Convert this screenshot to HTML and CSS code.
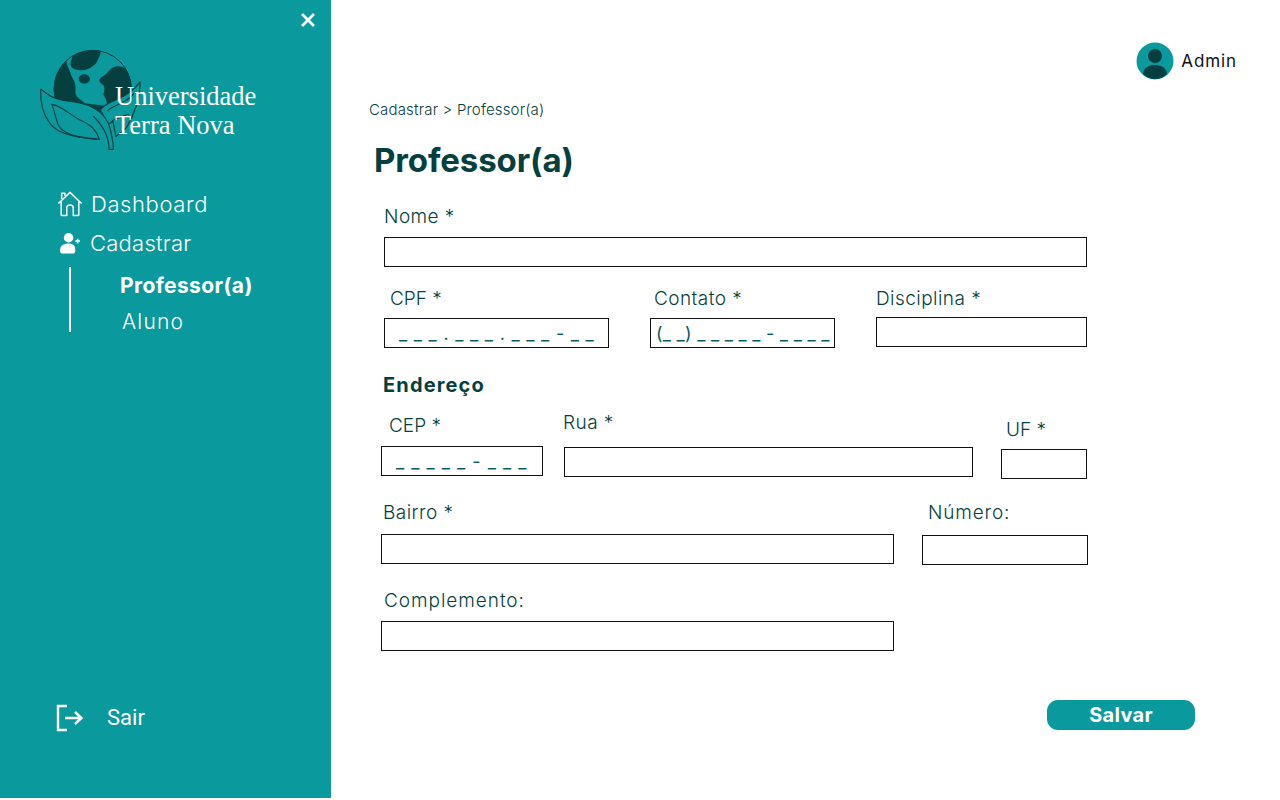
FILE: index.html
```html
<!DOCTYPE html>
<html lang="pt">
<head>
<meta charset="utf-8">
<title>Professor(a)</title>
<link rel="stylesheet" href="styles.css">
</head>
<body>
<aside class="sidebar">
  <div class="close-row">
    <svg class="close-icon" viewBox="0 0 16 16"><path d="M2 2L14 14M14 2L2 14"/></svg>
  </div>
  <div class="logo">
    <svg class="logo-mark" viewBox="0 0 360 360">
      <defs><clipPath id="globe"><circle cx="188" cy="147" r="117"/></clipPath></defs>
      <circle class="g-dark" cx="188" cy="147" r="117"/>
      <g clip-path="url(#globe)">
        <path class="g-light" d="M132 40C126 56 119 68 122 76C124 84 130 88 140 89C155 92 173 92 188 79C203 68 203 58 208 50C211 44 212 38 214 28L300 60L310 100C295 84 272 76 254 80C238 84 236 98 220 108C206 116 204 124 216 132C226 138 224 152 220 164C226 174 232 182 230 198L165 190C150 176 136 170 136 155C138 140 136 128 128 115C122 104 120 92 114 80C110 72 108 64 110 58C116 50 124 44 132 40Z"/>
      </g>
      <circle class="g-ring" cx="188" cy="147" r="116"/>
      <ellipse class="g-dark" cx="163" cy="117" rx="17" ry="14"/>
      <path class="leaf-fill" d="M32 147C60 170 76 178 110 183C170 188 215 205 235 250C245 280 250 300 250 328L237 328C234 316 232 306 228 298L205 298C120 290 80 278 60 250C38 222 30 190 32 147Z"/>
      <path class="leaf-fill" d="M212 208C222 196 236 188 260 178C290 165 315 150 330 125C332 170 312 225 290 262L258 290L248 240L236 252Z"/>
      <path class="leaf" d="M32 147C60 170 76 178 110 183C170 188 215 205 235 250C245 280 250 300 250 328L237 328C237 290 222 262 190 228"/>
      <path class="leaf" d="M32 147C30 190 38 222 60 250C80 278 120 290 208 298"/>
      <path class="leaf" d="M66 193C100 200 120 225 150 240C185 255 200 272 208 298C150 295 100 285 85 255C75 230 72 210 66 193Z"/>
      <path class="leaf" d="M212 208C222 196 236 188 260 178C290 165 315 150 330 125C332 170 312 225 290 262L258 290L248 240"/>
      <path class="leaf" d="M232 212C256 192 290 190 312 160M250 240L296 222"/>
    </svg>
    <div class="logo-text">Universidade<br>Terra Nova</div>
  </div>
  <nav class="nav">
    <a class="nav-item nav-dash">
      <svg class="icon-home" viewBox="0 0 28 28"><path d="M1.500 13.500L14 1.500L26.500 13.500M5 8.500V2.500H8.500V5M4.500 11.500V25.500Q4.500 26.500 5.500 26.500H10.500V18Q10.500 15 14 15Q17.500 15 17.500 18V26.500H22.500Q23.500 26.500 23.500 25.500V11.500"/></svg>
      <span>Dashboard</span>
    </a>
    <a class="nav-item nav-cad">
      <svg class="icon-user" viewBox="0 0 22 22"><circle cx="9" cy="5.500" r="5"/><path d="M0 19C0 13.500 4 11.500 9 11.500C14 11.500 16 13.500 16 19C16 21 15 22 13 22H3C1 22 0 21 0 19Z"/><path class="plus" d="M16 9H21M18.500 6.500V11.500"/></svg>
      <span>Cadastrar</span>
    </a>
    <div class="subnav">
      <a class="sub-item sub-active">Professor(a)</a>
      <a class="sub-item sub-plain">Aluno</a>
    </div>
  </nav>
  <a class="logout">
    <svg class="icon-exit" viewBox="0 0 28 28"><path d="M11 2H2V26H11M9 14H25M19 8L25.500 14L19 20"/></svg>
    <span>Sair</span>
  </a>
</aside>
<main class="main">
  <header class="topbar">
    <svg class="avatar" viewBox="0 0 38 38"><circle class="av-bg" cx="19" cy="19" r="18.500"/><circle class="av-fg" cx="19" cy="14" r="7"/><path class="av-fg" d="M7 32C8 25 13 23 19 23C25 23 30 25 31 32C28 35 24 37 19 37C14 37 10 35 7 32Z"/></svg>
    <span class="admin">Admin</span>
  </header>
  <div class="crumb">Cadastrar &gt; Professor(a)</div>
  <h1 class="title">Professor(a)</h1>
  <form class="form">
    <div class="row row-nome">
      <div class="field f-nome"><label class="lab lab-nome">Nome *</label><div class="box"></div></div>
    </div>
    <div class="row row-doc">
      <div class="field f-cpf"><label class="lab lab-cpf">CPF *</label><div class="box mask m-cpf">_ _ _ . _ _ _ . _ _ _ - _ _</div></div>
      <div class="field f-contato"><label class="lab lab-contato">Contato *</label><div class="box mask m-tel">(_ _) _ _ _ _ _ - _ _ _ _</div></div>
      <div class="field f-disc"><label class="lab">Disciplina *</label><div class="box"></div></div>
    </div>
    <h2 class="section">Endereço</h2>
    <div class="row row-end">
      <div class="field f-cep"><label class="lab lab-cep">CEP *</label><div class="box mask m-cep">_ _ _ _ _ - _ _ _</div></div>
      <div class="field f-rua"><label class="lab lab-rua">Rua *</label><div class="box"></div></div>
      <div class="field f-uf"><label class="lab lab-uf">UF *</label><div class="box"></div></div>
    </div>
    <div class="row row-bairro">
      <div class="field f-bairro"><label class="lab lab-bairro">Bairro *</label><div class="box"></div></div>
      <div class="field f-num"><label class="lab lab-num">Número:</label><div class="box"></div></div>
    </div>
    <div class="row row-comp">
      <div class="field f-comp"><label class="lab lab-comp">Complemento:</label><div class="box"></div></div>
    </div>
    <div class="actions"><button class="save" type="button">Salvar</button></div>
  </form>
</main>
</body>
</html>
```
FILE: styles.css
```css
* { box-sizing: border-box; }
html, body { margin: 0; padding: 0; height: 800px; overflow: hidden; background: #fff; }
body { display: flex; font-family: Inter, "Open Sans", sans-serif; color: #053f40; }

.sidebar { width: 331px; height: 798px; background: #0a999c; display: flex; flex-direction: column; color: #fff; flex: none; }
.close-row { display: flex; justify-content: flex-end; padding: 12px 15px 0 0; }
.close-icon { width: 16px; height: 16px; fill: none; stroke: #fff; stroke-width: 2.8; display: block; }

.logo { position: relative; height: 120px; margin: 12px 0 0 30px; }
.logo-mark { width: 120px; height: 120px; display: block; }
.g-dark { fill: #053f40; }
.g-light { fill: #0a999c; }
.g-ring { fill: none; stroke: #053f40; stroke-width: 3; }
.leaf { fill: none; stroke: #053f40; stroke-width: 3.6; stroke-linejoin: round; }
.leaf-fill { fill: #0a999c; }
.logo-text { position: absolute; left: 85px; top: 42px; font-family: "Liberation Serif", serif; font-size: 26.500px; line-height: 29px; color: #fff; white-space: nowrap; }

.nav { display: flex; flex-direction: column; margin-top: 30px; }
.nav-item { display: flex; align-items: center; font-size: 22px; line-height: 28px; font-weight: 300; }
.nav-dash { padding-left: 57px; gap: 8px; height: 28px; letter-spacing: 0.6px; }
.nav-cad { padding-left: 60px; gap: 9px; height: 28px; margin-top: 11px; letter-spacing: 0.25px; }
.icon-home { width: 26px; height: 26px; fill: none; stroke: #fff; stroke-width: 1.6; stroke-linejoin: round; }
.icon-user { width: 21px; height: 22px; fill: #fff; }
.plus { fill: none; stroke: #fff; stroke-width: 1.6; }
.subnav { margin: 10px 0 0 69px; border-left: 2px solid #fff; height: 65px; display: flex; flex-direction: column; }
.sub-item { display: block; font-size: 21px; line-height: 28px; white-space: nowrap; }
.sub-active { font-weight: 700; margin: 5px 0 0 49px; letter-spacing: 0.4px; }
.sub-plain { font-weight: 300; margin: 8px 0 0 51px; letter-spacing: 1.2px; }

.logout { display: flex; align-items: center; margin-top: auto; margin-bottom: 66px; padding-left: 56px; gap: 23px; font-family: Roboto, sans-serif; font-size: 22px; line-height: 28px; }
.icon-exit { width: 28px; height: 28px; fill: none; stroke: #fff; stroke-width: 2.4; }

.main { flex: 1; min-width: 0; display: flex; flex-direction: column; align-items: flex-start; padding-left: 38px; }
.topbar { align-self: stretch; display: flex; align-items: center; justify-content: flex-end; gap: 7px; padding: 42px 43px 0 0; height: 80px; }
.avatar { width: 38px; height: 38px; flex: none; }
.av-bg { fill: #0a999c; }
.av-fg { fill: #053f40; }
.admin { font-size: 17px; line-height: 38px; color: #111; letter-spacing: 0.9px; font-weight: 400; }
.crumb { font-size: 15px; line-height: 20px; margin-top: 20px; font-weight: 350; letter-spacing: 0.17px; }
.title { font-size: 33px; line-height: 40px; font-weight: 700; margin: 20px 0 0 5px; letter-spacing: -0.1px; }

.form { width: 720px; margin-top: 25px; display: flex; flex-direction: column; }
.row { display: flex; align-items: flex-start; }
.field { display: flex; flex-direction: column; }
.lab { display: block; font-size: 19px; line-height: 24px; white-space: nowrap; font-weight: 350; letter-spacing: 0.45px; }
.box { height: 30px; border: 1px solid #111; background: #fff; }
.mask { font-size: 18px; line-height: 30px; white-space: pre; color: #0b5d5e; overflow: hidden; }

.row-nome { padding-left: 15px; }
.f-nome { width: 703px; }
.lab-nome { margin-bottom: 8px; }

.row-doc { margin-top: 20px; padding-left: 15px; }
.f-cpf { width: 225px; }
.lab-cpf { padding-left: 6px; margin-bottom: 7px; letter-spacing: 0; }
.f-contato { width: 185px; margin-left: 41px; }
.lab-contato { padding-left: 4px; margin-bottom: 7px; }
.f-disc { width: 211px; margin-left: 41px; }
.f-disc .lab { margin-bottom: 6px; }
.m-cpf { padding-left: 14px; letter-spacing: 0.77px; }
.m-tel { padding-left: 5px; letter-spacing: 0.25px; }
.m-cep { padding-left: 14px; letter-spacing: 1px; }

.section { font-size: 20px; line-height: 26px; font-weight: 700; margin: 24px 0 0 14px; letter-spacing: 1.15px; }

.row-end { padding-left: 12px; margin-top: 13px; }
.f-cep { width: 162px; margin-top: 3px; }
.lab-cep { padding-left: 8px; margin-bottom: 8px; letter-spacing: 0; }
.f-rua { width: 409px; margin-left: 21px; }
.lab-rua { margin-bottom: 12px; margin-left: -1px; }
.f-uf { width: 86px; margin-left: 28px; margin-top: 7px; }
.lab-uf { padding-left: 5px; margin-bottom: 7px; letter-spacing: 0; }

.row-bairro { padding-left: 12px; margin-top: 22px; }
.f-bairro { width: 513px; }
.lab-bairro { padding-left: 2px; margin-bottom: 9px; }
.f-num { width: 166px; margin-left: 28px; }
.lab-num { padding-left: 6px; margin-bottom: 10px; letter-spacing: 0.85px; }

.row-comp { padding-left: 12px; margin-top: 24px; }
.f-comp { width: 513px; }
.lab-comp { padding-left: 3px; margin-bottom: 8px; letter-spacing: 0.95px; }

.actions { display: flex; justify-content: flex-end; margin-top: 49px; width: 826px; }
.save { width: 148px; height: 30px; border: 0; border-radius: 11px; background: #0a999c; color: #fff; font-family: Inter, sans-serif; font-size: 20px; font-weight: 700; padding: 0; letter-spacing: 0.3px; }
```
